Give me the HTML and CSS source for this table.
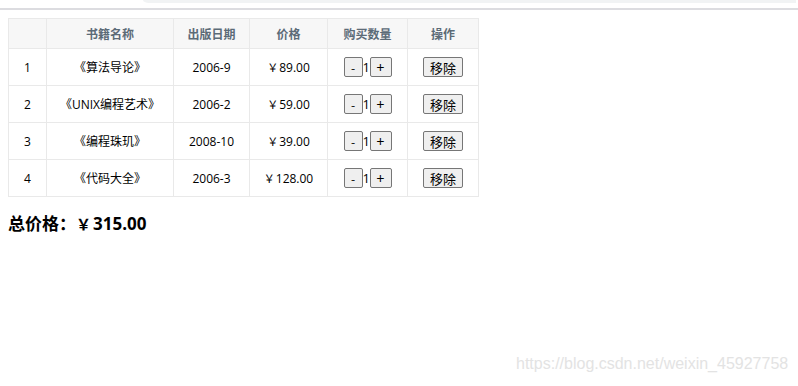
FILE: index.html
```html
<!DOCTYPE html>
<html lang="zh-CN">
<head>
    <meta charset="UTF-8">
    <meta name="viewport" content="width=device-width, initial-scale=1.0">
    <title>书籍购物车</title>
    <link rel="stylesheet" href="styles.css">
</head>
<body>
    <div class="topbar"><div class="tab-strip"></div></div>

    <div id="app">
        <table class="cart">
            <thead>
                <tr>
                    <th class="col-idx"></th>
                    <th class="col-name">书籍名称</th>
                    <th class="col-date">出版日期</th>
                    <th class="col-price">价格</th>
                    <th class="col-count">购买数量</th>
                    <th class="col-op">操作</th>
                </tr>
            </thead>
            <tbody>
                <tr>
                    <td>1</td>
                    <td>《算法导论》</td>
                    <td>2006-9</td>
                    <td><span class="yen">￥</span>89.00</td>
                    <td><button class="step">-</button><span class="count">1</span><button class="step plus">+</button></td>
                    <td><button class="remove">移除</button></td>
                </tr>
                <tr>
                    <td>2</td>
                    <td>《UNIX编程艺术》</td>
                    <td>2006-2</td>
                    <td><span class="yen">￥</span>59.00</td>
                    <td><button class="step">-</button><span class="count">1</span><button class="step plus">+</button></td>
                    <td><button class="remove">移除</button></td>
                </tr>
                <tr>
                    <td>3</td>
                    <td>《编程珠玑》</td>
                    <td>2008-10</td>
                    <td><span class="yen">￥</span>39.00</td>
                    <td><button class="step">-</button><span class="count">1</span><button class="step plus">+</button></td>
                    <td><button class="remove">移除</button></td>
                </tr>
                <tr>
                    <td>4</td>
                    <td>《代码大全》</td>
                    <td>2006-3</td>
                    <td><span class="yen">￥</span>128.00</td>
                    <td><button class="step">-</button><span class="count">1</span><button class="step plus">+</button></td>
                    <td><button class="remove">移除</button></td>
                </tr>
            </tbody>
        </table>
        <h2 class="total">总价格：<span class="yen">￥</span>315.00</h2>
    </div>

    <div class="watermark">https://blog.csdn.net/weixin_45927758</div>
</body>
</html>
```

FILE: styles.css
```css
body {
    margin: 0;
    font-family: 'Open Sans', 'Noto Sans CJK SC', sans-serif;
    color: #000;
    background: #fff;
}
.topbar {
    height: 8px;
    border-bottom: 2px solid #dcdce0;
}
.tab-strip {
    margin-left: 143px;
    margin-right: 2px;
    height: 3px;
    background: #f1f3f4;
    border-bottom-left-radius: 6px 3px;
}
#app {
    padding: 8px;
}
.cart {
    border: 1px solid #e9e9e9;
    border-collapse: collapse;
    border-spacing: 0;
    font-size: 12px;
}
.cart th,
.cart td {
    border: 1px solid #e9e9e9;
    padding: 0 8px;
    text-align: center;
}
.cart th {
    height: 29px;
    background-color: #f7f7f7;
    color: #5c6b77;
    font-weight: 600;
}
.cart td {
    height: 36px;
}
.col-idx { width: 21px; }
.col-name { width: 110px; }
.col-date { width: 59px; }
.col-price { width: 61px; }
.col-count { width: 63px; }
.col-op { width: 54px; }
.yen {
    display: inline-block;
    width: 12px;
    font-size: 11px;
    text-align: left;
}
.cart button {
    font-family: 'Noto Sans CJK SC', sans-serif;
    font-size: 12px;
    color: #000;
    background: #efefef;
    border: 1px solid #767676;
    border-radius: 2px;
    padding: 0;
    height: 20px;
    line-height: 17px;
    vertical-align: middle;
}
.step {
    width: 19px;
}
.plus {
    width: 22px;
    font-size: 14px !important;
}
.count {
    display: inline-block;
    width: 7px;
    font-size: 13px;
    vertical-align: middle;
}
.remove {
    width: 40px;
    font-size: 13px !important;
}
.total {
    margin: 13px 0 0;
    font-size: 17px;
    font-weight: 700;
}
.total .yen {
    width: 17px;
    font-size: 15px;
}
.watermark {
    position: absolute;
    left: 516px;
    top: 355px;
    font-family: 'Liberation Sans', Arial, sans-serif;
    font-size: 16px;
    color: #e3e3e3;
}
```
